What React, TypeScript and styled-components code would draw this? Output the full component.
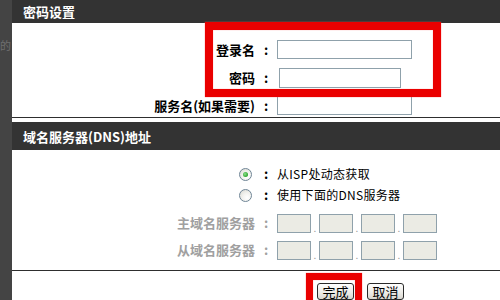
import React from "react";
import styled, { createGlobalStyle } from "styled-components";

const GlobalStyle = createGlobalStyle`
  html, body {
    margin: 0;
    padding: 0;
    background: #444;
  }
  body {
    font-family: "Noto Sans CJK SC", "Liberation Sans", sans-serif;
  }
`;

const Page = styled.div`
  position: relative;
  display: flex;
  width: 500px;
  height: 300px;
  overflow: hidden;
  background: #444;
`;

const Strip = styled.div`
  flex: none;
  width: 12px;
  padding-top: 38px;
  color: #6e6e6e;
  font-size: 11px;
  line-height: 14px;
`;

const Panel = styled.div`
  flex: 1;
  display: flex;
  flex-direction: column;
  background: #fff;
`;

const Title = styled.div<{ $h: number }>`
  height: ${(p) => p.$h}px;
  display: flex;
  align-items: center;
  padding-left: 11px;
  background: #333;
  color: #fff;
  font-size: 13px;
  font-weight: bold;
`;

const Form = styled.div<{ $rows: string; $pad: string; $gap?: number; $align?: string }>`
  display: grid;
  grid-template-columns: 243px 22px 1fr;
  grid-template-rows: ${(p) => p.$rows};
  row-gap: ${(p) => p.$gap ?? 0}px;
  align-items: ${(p) => p.$align ?? "end"};
  padding: ${(p) => p.$pad};
`;

const Label = styled.div<{ $muted?: boolean }>`
  height: 20px;
  line-height: 20px;
  text-align: right;
  font-size: 13px;
  font-weight: bold;
  color: ${(p) => (p.$muted ? "#a0a0a0" : "#000")};
  white-space: nowrap;
`;

const Colon = styled.div<{ $muted?: boolean }>`
  height: 20px;
  line-height: 20px;
  text-align: center;
  font-size: 13px;
  font-weight: bold;
  color: ${(p) => (p.$muted ? "#a0a0a0" : "#000")};
`;

const TextInput = styled.div<{ $w: number; $h: number; $off?: number }>`
  box-sizing: border-box;
  width: ${(p) => p.$w}px;
  height: ${(p) => p.$h}px;
  margin-left: ${(p) => p.$off ?? 0}px;
  border: 1px solid #8fa1ab;
  background: #fff;
  align-self: start;
`;

const RadioCell = styled.div`
  height: 20px;
  display: flex;
  align-items: center;
  justify-content: flex-end;
  padding-right: 3px;
`;

const Radio = styled.span<{ $checked?: boolean }>`
  position: relative;
  box-sizing: border-box;
  width: 13px;
  height: 13px;
  border-radius: 50%;
  border: 1px solid #6f8596;
  background: radial-gradient(circle at 65% 70%, #ffffff 0%, #f2f2ee 45%, #d6d6cf 100%);
  &::after {
    content: "";
    display: ${(p) => (p.$checked ? "block" : "none")};
    position: absolute;
    left: 3px;
    top: 3px;
    width: 5px;
    height: 5px;
    border-radius: 50%;
    background: radial-gradient(circle at 40% 40%, #8be08b 0%, #2ea52e 70%);
  }
`;

const Option = styled.div`
  height: 20px;
  line-height: 20px;
  font-size: 12px;
  color: #000;
  letter-spacing: 0.3px;
  white-space: nowrap;
`;

const IpGroup = styled.div`
  display: flex;
  align-items: flex-end;
  height: 19px;
`;

const IpBox = styled.span`
  box-sizing: border-box;
  width: 34px;
  height: 19px;
  border: 1px solid #8fa1ab;
  background: #ebebe4;
`;

const IpDot = styled.span`
  width: 8px;
  text-align: center;
  font-size: 10px;
  line-height: 10px;
  color: #9a9a9a;
`;

const Rule = styled.div<{ $gap?: number }>`
  height: 1px;
  background: #2e2e2e;
  margin-bottom: ${(p) => p.$gap ?? 0}px;
`;

const Actions = styled.div`
  display: flex;
  gap: 13px;
  padding: 12px 0 0 305px;
`;

const Button = styled.button`
  box-sizing: border-box;
  width: 37px;
  height: 17px;
  padding: 0;
  border: 1px solid #2a2a2a;
  border-radius: 3px;
  background: linear-gradient(#ffffff, #ecebe6 60%, #d8d6cf);
  font-family: "Noto Sans CJK SC", sans-serif;
  font-size: 13px;
  line-height: 14px;
  color: #000;
`;

const RedFrame = styled.div<{ $x: number; $y: number; $w: number; $h: number; $t: number }>`
  position: absolute;
  left: ${(p) => p.$x}px;
  top: ${(p) => p.$y}px;
  width: ${(p) => p.$w}px;
  height: ${(p) => p.$h}px;
  box-sizing: border-box;
  border: ${(p) => p.$t}px solid #ea0000;
  box-shadow: 0 0 1px #ff6060, inset 0 0 1px #ff6060;
  pointer-events: none;
`;

function IpField() {
  return (
    <IpGroup>
      <IpBox />
      <IpDot>.</IpDot>
      <IpBox />
      <IpDot>.</IpDot>
      <IpBox />
      <IpDot>.</IpDot>
      <IpBox />
    </IpGroup>
  );
}

export default function App() {
  return (
    <Page>
      <GlobalStyle />
      <Strip>的</Strip>
      <Panel>
        <Title $h={23}>密码设置</Title>
        <Form $rows="20px 20px 20px" $pad="17px 0 1px 0" $gap={8} $align="center">
          <Label>登录名</Label>
          <Colon>:</Colon>
          <TextInput $w={135} $h={19} />
          <Label>密码</Label>
          <Colon>:</Colon>
          <TextInput $w={122} $h={20} $off={2} />
          <Label>服务名(如果需要)</Label>
          <Colon>:</Colon>
          <TextInput $w={135} $h={19} />
        </Form>
        <Rule $gap={4} />
        <Title $h={28}>域名服务器(DNS)地址</Title>
        <Form $rows="20px 21px 28px 27px" $pad="14px 0 10px 0">
          <RadioCell>
            <Radio $checked />
          </RadioCell>
          <Colon>:</Colon>
          <Option>从ISP处动态获取</Option>
          <RadioCell>
            <Radio />
          </RadioCell>
          <Colon>:</Colon>
          <Option>使用下面的DNS服务器</Option>
          <Label $muted>主域名服务器</Label>
          <Colon $muted>:</Colon>
          <IpField />
          <Label $muted>从域名服务器</Label>
          <Colon $muted>:</Colon>
          <IpField />
        </Form>
        <Rule />
        <Actions>
          <Button>完成</Button>
          <Button>取消</Button>
        </Actions>
      </Panel>
      <RedFrame $x={205} $y={22} $w={236} $h={75} $t={8} />
      <RedFrame $x={306} $y={273} $w={56} $h={40} $t={7} />
    </Page>
  );
}
